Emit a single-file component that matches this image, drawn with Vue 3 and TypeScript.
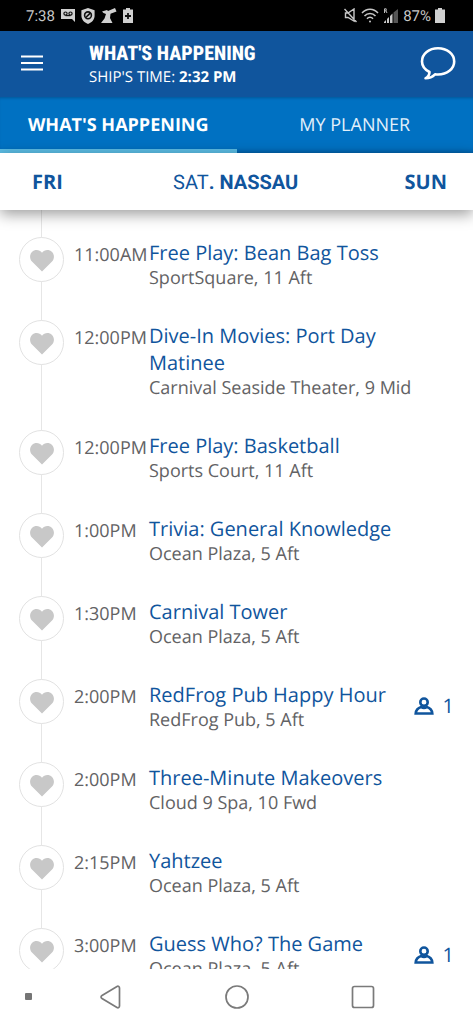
<script setup lang="ts">
interface Activity {
  time: string
  title: string
  place: string
  friends?: number
}

const activities: Activity[] = [
  { time: '11:00AM', title: 'Free Play: Bean Bag Toss', place: 'SportSquare, 11 Aft' },
  { time: '12:00PM', title: 'Dive-In Movies: Port Day Matinee', place: 'Carnival Seaside Theater, 9 Mid' },
  { time: '12:00PM', title: 'Free Play: Basketball', place: 'Sports Court, 11 Aft' },
  { time: '1:00PM', title: 'Trivia: General Knowledge', place: 'Ocean Plaza, 5 Aft' },
  { time: '1:30PM', title: 'Carnival Tower', place: 'Ocean Plaza, 5 Aft' },
  { time: '2:00PM', title: 'RedFrog Pub Happy Hour', place: 'RedFrog Pub, 5 Aft', friends: 1 },
  { time: '2:00PM', title: 'Three-Minute Makeovers', place: 'Cloud 9 Spa, 10 Fwd' },
  { time: '2:15PM', title: 'Yahtzee', place: 'Ocean Plaza, 5 Aft' },
  { time: '3:00PM', title: 'Guess Who? The Game', place: 'Ocean Plaza, 5 Aft', friends: 1 },
]
</script>

<template>
  <div class="app">
    <div class="status">
      <span class="clock">7:38</span>
      <svg width="14" height="13" viewBox="0 0 14 13">
        <path fill="#d0d0d0" d="M0 0h14v13l-3-3H0z" />
        <g fill="none" stroke="#111" stroke-width="1.2"><circle cx="4.5" cy="4.6" r="1.6" /><circle cx="9.5" cy="4.6" r="1.6" /><path d="M4.5 6.6h5" /></g>
      </svg>
      <svg width="14" height="16" viewBox="0 0 14 16">
        <path fill="#d0d0d0" d="M7 0l6.600 2.300v5.200c0 4-2.600 7-6.600 8.500C3 14.500.4 11.500.4 7.500V2.300z" />
        <g fill="none" stroke="#111" stroke-width="1.600"><circle cx="7" cy="7.300" r="3.400" /><path d="M4.800 9.500l4.400-4.400" /></g>
      </svg>
      <svg width="16" height="15" viewBox="0 0 16 15">
        <path fill="#d0d0d0" d="M1 3.500l5-1.500 1 1 7-3 1.500 3.500-6 2.300L9 10l2.500 5H0l3.500-4.500L5 6 2.500 5z" />
      </svg>
      <svg width="10" height="15" viewBox="0 0 10 15">
        <path fill="#d0d0d0" d="M3 0h4v1.500h3V15H0V1.500h3z" /><path stroke="#111" stroke-width="1.800" d="M5 5v6M2 8h6" />
      </svg>
      <div class="signals">
        <svg width="13" height="15" viewBox="0 0 13 15" fill="none" stroke="#c8c8c8" stroke-width="1.400">
          <path d="M1.500 5H4l6-4v12L4 9.500H1.500zM.5 1l12 13" />
        </svg>
        <svg width="18" height="15" viewBox="0 0 18 15" fill="none" stroke="#c8c8c8" stroke-width="1.500">
          <path d="M1 5c4.500-5 11.500-5 16 0M3.500 8c3-3.500 8-3.500 11 0M6 10.700c1.600-1.800 4.400-1.800 6 0" /><circle cx="9" cy="13.500" r="1" fill="#c8c8c8" stroke="none" />
        </svg>
        <svg width="16" height="16" viewBox="0 0 16 16">
          <path fill="none" stroke="#bbb" d="M1.500 5V.8h1.700v2H1.500M3 3l1 2" />
          <path fill="#c8c8c8" d="M1 14l2-2v3H1zM4 11l2-2v6H4zM7 8l2.500-2.500V15H7z" /><path fill="#555" d="M10.500 4.500L15 1v14h-4.500z" />
        </svg>
        <span>87%</span>
        <svg width="10" height="15" viewBox="0 0 10 15"><path fill="#d0d0d0" d="M3 0h4v1.500h3V15H0V1.500h3z" /></svg>
      </div>
    </div>

    <header class="header">
      <button aria-label="Menu">
        <svg width="22" height="16" viewBox="0 0 22 16" stroke="#fff" stroke-width="2"><path d="M0 1.500h22M0 8h22M0 14.500h22" /></svg>
      </button>
      <div class="heading">
        <h1>WHAT'S HAPPENING</h1>
        <p>SHIP'S TIME: <b>2:32 PM</b></p>
      </div>
      <button aria-label="Chat">
        <svg width="36" height="34" viewBox="0 0 36 34" fill="none" stroke="#fff" stroke-width="2.600" stroke-linejoin="round">
          <path d="M9.500 26C4.500 23.500 2 19.500 2 15.500 2 8 9 2.300 18 2.300S34.200 8 34.200 15.500 27 28.500 18 28.500c-1 0-2-.1-3-.2-2.500 2.600-5.500 4-9.500 4 2.800-1.500 4-3.500 4-6.300z" />
        </svg>
      </button>
    </header>

    <nav class="tabs">
      <button class="tab active">WHAT'S HAPPENING</button>
      <button class="tab">MY PLANNER</button>
    </nav>

    <div class="days">
      <button>FRI</button>
      <button class="current"><span>SAT</span>. NASSAU</button>
      <button>SUN</button>
    </div>

    <main class="schedule">
      <ul>
        <li v-for="(item, i) in activities" :key="i">
          <button class="heart" :aria-label="'Add ' + item.title + ' to planner'">
            <svg width="24" height="22" viewBox="0 0 24 22"><path fill="#c8c8c8" d="M12 21.500L2.200 11.800C-.7 8.900-.5 4.500 2 2 4.800-.7 9.500-.5 12 2.700 14.500-.5 19.200-.7 22 2c2.500 2.500 2.700 6.900-.2 9.800z" /></svg>
          </button>
          <time>{{ item.time }}</time>
          <div class="info">
            <a href="#">{{ item.title }}</a>
            <p>{{ item.place }}</p>
          </div>
          <span v-if="item.friends" class="friends">
            <svg width="20" height="18" viewBox="0 0 20 18" fill="none" stroke="#10559d" stroke-width="2.600">
              <circle cx="10" cy="5.200" r="3.700" /><path d="M1.700 16.500h16.600c-.3-3.500-2.500-5.500-5.500-6.400-1.700 1.100-3.900 1.100-5.600 0-3 .9-5.200 2.900-5.500 6.400z" />
            </svg>
            {{ item.friends }}
          </span>
        </li>
      </ul>
    </main>

    <nav class="system">
      <i class="dot"></i>
      <button aria-label="Back"><svg width="24" height="24" viewBox="0 0 24 24"><path d="M18 1.500L3 10.500c-1.300.8-1.300 2.200 0 3l15 9c1.200.7 2.500 0 2.500-1.400V3c0-1.400-1.300-2.200-2.500-1.500z" /></svg></button>
      <button aria-label="Home"><svg width="24" height="24" viewBox="0 0 24 24"><circle cx="12" cy="12" r="11" /></svg></button>
      <button aria-label="Recent apps"><svg width="24" height="24" viewBox="0 0 24 24"><rect x="1.500" y="1.500" width="21" height="21" rx="2" /></svg></button>
    </nav>
  </div>
</template>

<style>
body { margin: 0; }
</style>

<style scoped>
.app {
  height: 100vh;
  display: flex;
  flex-direction: column;
  overflow: hidden;
  background: #fff;
  color: #626264;
  font-family: "Open Sans", sans-serif;
  text-rendering: geometricPrecision;
}
* { box-sizing: border-box; }
button { border: 0; padding: 0; background: none; color: inherit; font: inherit; cursor: pointer; text-rendering: inherit; }
h1, p, ul { margin: 0; padding: 0; }
svg { display: block; flex: none; }
.status {
  height: 31px;
  flex: none;
  display: flex;
  align-items: center;
  gap: 6px;
  padding: 0 28px 0 26px;
  background: #000;
  color: #c8c8c8;
  font: 15px Roboto, sans-serif;
}
.signals { margin-left: auto; display: flex; align-items: center; gap: 4px; }
.header {
  height: 66px;
  flex: none;
  display: flex;
  align-items: center;
  padding: 0 17px 2px 21px;
  background: #10559d;
  color: #fff;
}
.heading { flex: 1; margin-left: 46px; padding-top: 4px; }
.heading h1 { font: 800 20px/24px "Roboto Condensed", "Open Sans", sans-serif; }
.heading p { font-size: 15px; line-height: 24px; }
.tabs {
  height: 56px;
  flex: none;
  display: grid;
  grid-template-columns: 1fr 1fr;
  background: #0071c2;
  box-shadow: inset 0 3px 3px -2px #00579a, inset 0 -5px 5px -4px #00579a;
  color: #e2f0fb;
  font-size: 18px;
}
.tab { border-bottom: 4px solid transparent; padding-top: 4px; }
.tab.active { border-color: #5bbce4; color: #fff; font-weight: 700; }
.days {
  height: 57px;
  flex: none;
  display: flex;
  align-items: center;
  justify-content: space-between;
  padding: 0 26px 0 32px;
  background: #fff;
  box-shadow: 0 4px 14px rgba(0, 0, 0, 0.4);
  z-index: 1;
  color: #10559d;
  font-weight: 700;
  font-size: 20px;
}
.days .current { padding-left: 4px; font-family: Roboto, sans-serif; }
.days .current span { font-weight: 400; }
.schedule { flex: 1; min-height: 0; overflow: hidden; }
ul {
  list-style: none;
  padding: 27px 19px 0 19px;
  background: linear-gradient(#e6e6e6, #e6e6e6) 41px 0 / 1px 100% no-repeat;
}
li {
  display: grid;
  grid-template-columns: 55px 75px 1fr auto;
  align-items: start;
  padding-bottom: 30px;
}
.heart {
  width: 45px;
  height: 45px;
  display: grid;
  place-items: center;
  padding-top: 2px;
  border: 1px solid #e2e2e2;
  border-radius: 50%;
  background: #fff;
}
time { margin-top: 5px; font-size: 18px; line-height: 26px; }
.info { padding-top: 2px; }
.info a { display: block; color: #10559d; font-size: 20px; line-height: 27px; text-decoration: none; }
.info p { font-size: 18px; line-height: 24px; }
.friends {
  align-self: center;
  display: flex;
  align-items: center;
  gap: 9px;
  color: #10559d;
  font-size: 20px;
  line-height: 24px;
}
.system {
  height: 55px;
  flex: none;
  display: grid;
  grid-template-columns: 1fr 126px 126px 126px 1fr;
  justify-items: center;
  align-items: center;
  background: #fff;
}
.system .dot { width: 7px; height: 7px; margin-left: 10px; border-radius: 1px; background: #757575; }
.system svg { fill: none; stroke: #7a7a7a; stroke-width: 1.7; }
</style>
